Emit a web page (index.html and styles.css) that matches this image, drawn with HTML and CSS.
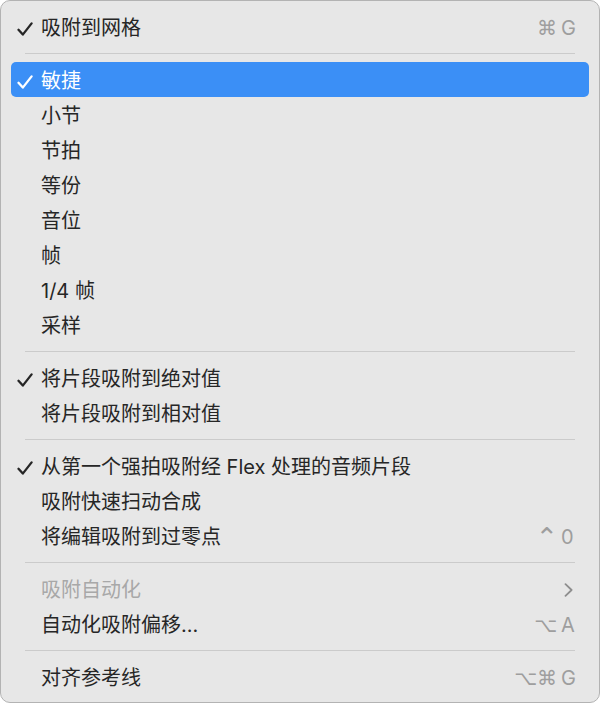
FILE: index.html
```html
<!DOCTYPE html>
<html lang="zh-CN">
<head>
<meta charset="utf-8">
<title>吸附菜单</title>
<link rel="stylesheet" href="styles.css">
</head>
<body>
<div class="menu">
  <div class="item">
    <span class="check"><svg viewBox="0 0 16 14" width="16" height="14"><path d="M1.5 7.8 L5.8 12.6 L14.6 1.4"/></svg></span>
    <span class="label">吸附到网格</span>
    <span class="sc"><span class="mods">⌘</span><span class="key">G</span></span>
  </div>
  <div class="sep"></div>
  <div class="item active">
    <span class="check"><svg viewBox="0 0 16 14" width="16" height="14"><path d="M1.5 7.8 L5.8 12.6 L14.6 1.4"/></svg></span>
    <span class="label">敏捷</span>
  </div>
  <div class="item"><span class="check"></span><span class="label">小节</span></div>
  <div class="item"><span class="check"></span><span class="label">节拍</span></div>
  <div class="item"><span class="check"></span><span class="label">等份</span></div>
  <div class="item"><span class="check"></span><span class="label">音位</span></div>
  <div class="item"><span class="check"></span><span class="label">帧</span></div>
  <div class="item"><span class="check"></span><span class="label">1/4 帧</span></div>
  <div class="item"><span class="check"></span><span class="label">采样</span></div>
  <div class="sep"></div>
  <div class="item">
    <span class="check"><svg viewBox="0 0 16 14" width="16" height="14"><path d="M1.5 7.8 L5.8 12.6 L14.6 1.4"/></svg></span>
    <span class="label">将片段吸附到绝对值</span>
  </div>
  <div class="item"><span class="check"></span><span class="label">将片段吸附到相对值</span></div>
  <div class="sep"></div>
  <div class="item">
    <span class="check"><svg viewBox="0 0 16 14" width="16" height="14"><path d="M1.5 7.8 L5.8 12.6 L14.6 1.4"/></svg></span>
    <span class="label">从第一个强拍吸附经 Flex 处理的音频片段</span>
  </div>
  <div class="item"><span class="check"></span><span class="label">吸附快速扫动合成</span></div>
  <div class="item">
    <span class="check"></span><span class="label">将编辑吸附到过零点</span>
    <span class="sc"><span class="mods ctrl">⌃</span><span class="key">0</span></span>
  </div>
  <div class="sep"></div>
  <div class="item disabled">
    <span class="check"></span><span class="label">吸附自动化</span>
    <span class="chev"><svg viewBox="0 0 9 14" width="9" height="14"><path d="M1.5 1.2 L7.6 7 L1.5 12.8"/></svg></span>
  </div>
  <div class="item">
    <span class="check"></span><span class="label">自动化吸附偏移...</span>
    <span class="sc"><span class="mods">⌥</span><span class="key">A</span></span>
  </div>
  <div class="sep"></div>
  <div class="item">
    <span class="check"></span><span class="label">对齐参考线</span>
    <span class="sc"><span class="mods">⌥⌘</span><span class="key">G</span></span>
  </div>
</div>
</body>
</html>
```

FILE: styles.css
```css
html, body {
  margin: 0;
  padding: 0;
  background: #ffffff;
}

body {
  width: 601px;
  height: 705px;
  overflow: hidden;
}

.menu {
  box-sizing: border-box;
  width: 600px;
  height: 703px;
  background: #e7e7e7;
  border: 1px solid #b3b3b3;
  border-radius: 10px;
  padding: 8px 10px;
  font-family: "Inter", "Noto Sans CJK SC", sans-serif;
  font-size: 20px;
  color: #262626;
}

.item {
  display: flex;
  align-items: center;
  height: 35px;
  padding: 0 13px 0 0;
  border-radius: 5px;
}

.item.active {
  background: #3b8ff6;
  color: #ffffff;
}

.item.disabled {
  color: #a8a8a8;
}

.check {
  flex: none;
  width: 30px;
  height: 35px;
  display: flex;
  align-items: center;
  padding-left: 6px;
  padding-top: 4px;
  box-sizing: border-box;
}

.check svg path {
  fill: none;
  stroke: #262626;
  stroke-width: 2.3;
  stroke-linecap: round;
  stroke-linejoin: round;
}

.item.active .check svg path {
  stroke: #ffffff;
}

.label {
  flex: 1;
  line-height: 35px;
  padding-top: 4px;
  white-space: nowrap;
}

.sc {
  flex: none;
  display: flex;
  align-items: center;
  color: #9e9e9e;
  line-height: 35px;
  padding-top: 3px;
}

.mods {
  font-family: "DejaVu Sans", sans-serif;
  font-size: 20px;
  margin-right: 4px;
}

.mods.ctrl {
  font-size: 27px;
  line-height: 35px;
  margin-right: 3px;
}

.key {
  width: 15px;
  text-align: left;
}

.chev {
  flex: none;
  display: flex;
  align-items: center;
  margin-right: 3px;
  padding-top: 2px;
}

.chev svg path {
  fill: none;
  stroke: #8e8e8e;
  stroke-width: 1.8;
  stroke-linecap: round;
  stroke-linejoin: round;
}

.sep {
  height: 1px;
  margin: 9px 14px 8px;
  background: #cbcbcb;
}
```
